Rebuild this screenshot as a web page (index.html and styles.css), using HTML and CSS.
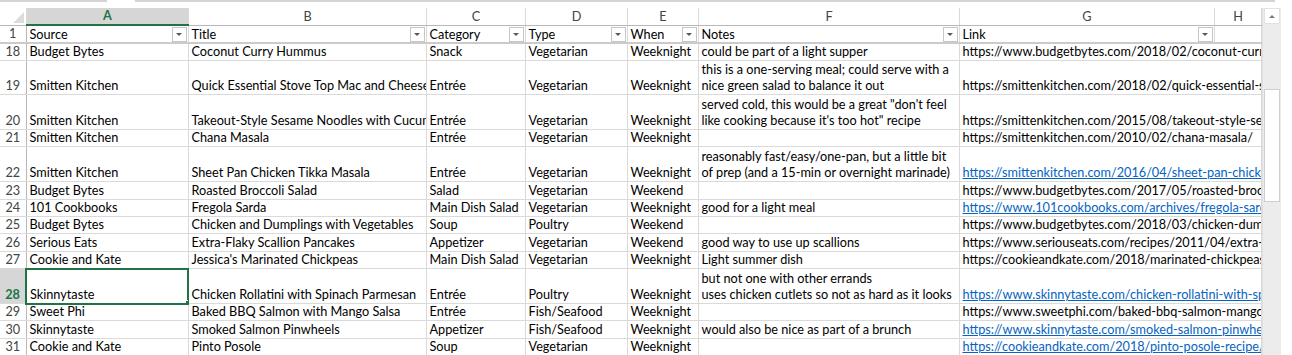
FILE: index.html
```html
<!DOCTYPE html>
<html lang="en">
<head>
    <meta charset="UTF-8">
    <meta name="viewport" content="width=device-width, initial-scale=1.0">
    <title>Recipes - Excel</title>
    <link rel="stylesheet" href="styles.css">
</head>
<body>
    <div class="formula-edge">
        <span class="name-box"></span>
        <span class="fx-gap"></span>
        <span class="formula-box"></span>
    </div>
    <div class="window">
        <table class="sheet">
            <colgroup>
                <col class="w-rh">
                <col class="w-a">
                <col class="w-b">
                <col class="w-c">
                <col class="w-d">
                <col class="w-e">
                <col class="w-f">
                <col class="w-g">
                <col class="w-h">
            </colgroup>
            <thead>
                <tr class="letters">
                    <th class="corner"><div class="corner-box"><span class="tri"></span></div></th>
                    <th class="col active">A</th>
                    <th class="col">B</th>
                    <th class="col">C</th>
                    <th class="col">D</th>
                    <th class="col">E</th>
                    <th class="col">F</th>
                    <th class="col">G</th>
                    <th class="col">H</th>
                </tr>
            </thead>
            <tbody>
                <tr class="frozen">
                    <td class="rn">1</td>
                    <td class="hd"><div class="hd-box"><span>Source</span><span class="filt"></span></div></td>
                    <td class="hd"><div class="hd-box"><span>Title</span><span class="filt"></span></div></td>
                    <td class="hd"><div class="hd-box"><span>Category</span><span class="filt"></span></div></td>
                    <td class="hd"><div class="hd-box"><span>Type</span><span class="filt"></span></div></td>
                    <td class="hd"><div class="hd-box"><span>When</span><span class="filt"></span></div></td>
                    <td class="hd"><div class="hd-box"><span>Notes</span><span class="filt"></span></div></td>
                    <td class="hd"><div class="hd-box"><span>Link</span><span class="filt"></span></div></td>
                    <td></td>
                </tr>
                <tr class="single">
                    <td class="rn">18</td>
                    <td>Budget Bytes</td>
                    <td>Coconut Curry Hummus</td>
                    <td>Snack</td>
                    <td>Vegetarian</td>
                    <td>Weeknight</td>
                    <td>could be part of a light supper</td>
                    <td class="link" colspan="2">https://www.budgetbytes.com/2018/02/coconut-curry-hummus/</td>
                </tr>
                <tr class="double">
                    <td class="rn">19</td>
                    <td>Smitten Kitchen</td>
                    <td>Quick Essential Stove Top Mac and Cheese</td>
                    <td>Entrée</td>
                    <td>Vegetarian</td>
                    <td>Weeknight</td>
                    <td class="wrap">this is a one-serving meal; could serve with a<br>nice green salad to balance it out</td>
                    <td class="link" colspan="2">https://smittenkitchen.com/2018/02/quick-essential-stovetop-mac-and-cheese/</td>
                </tr>
                <tr class="double">
                    <td class="rn">20</td>
                    <td>Smitten Kitchen</td>
                    <td>Takeout-Style Sesame Noodles with Cucumber</td>
                    <td>Entrée</td>
                    <td>Vegetarian</td>
                    <td>Weeknight</td>
                    <td class="wrap">served cold, this would be a great "don't feel<br>like cooking because it's too hot" recipe</td>
                    <td class="link" colspan="2">https://smittenkitchen.com/2015/08/takeout-style-sesame-noodles-with-cucumber/</td>
                </tr>
                <tr class="single">
                    <td class="rn">21</td>
                    <td>Smitten Kitchen</td>
                    <td>Chana Masala</td>
                    <td>Entrée</td>
                    <td>Vegetarian</td>
                    <td>Weeknight</td>
                    <td></td>
                    <td class="link" colspan="2">https://smittenkitchen.com/2010/02/chana-masala/</td>
                </tr>
                <tr class="double">
                    <td class="rn">22</td>
                    <td>Smitten Kitchen</td>
                    <td>Sheet Pan Chicken Tikka Masala</td>
                    <td>Entrée</td>
                    <td>Vegetarian</td>
                    <td>Weeknight</td>
                    <td class="wrap">reasonably fast/easy/one-pan, but a little bit<br>of prep (and a 15-min or overnight marinade)</td>
                    <td class="link" colspan="2"><a href="#">https://smittenkitchen.com/2016/04/sheet-pan-chicken-tikka/</a></td>
                </tr>
                <tr class="single">
                    <td class="rn">23</td>
                    <td>Budget Bytes</td>
                    <td>Roasted Broccoli Salad</td>
                    <td>Salad</td>
                    <td>Vegetarian</td>
                    <td>Weekend</td>
                    <td></td>
                    <td class="link" colspan="2">https://www.budgetbytes.com/2017/05/roasted-broccoli-salad/</td>
                </tr>
                <tr class="single">
                    <td class="rn">24</td>
                    <td>101 Cookbooks</td>
                    <td>Fregola Sarda</td>
                    <td>Main Dish Salad</td>
                    <td>Vegetarian</td>
                    <td>Weeknight</td>
                    <td>good for a light meal</td>
                    <td class="link" colspan="2"><a href="#">https://www.101cookbooks.com/archives/fregola-sarda-recipe.html</a></td>
                </tr>
                <tr class="single">
                    <td class="rn">25</td>
                    <td>Budget Bytes</td>
                    <td>Chicken and Dumplings with Vegetables</td>
                    <td>Soup</td>
                    <td>Poultry</td>
                    <td>Weekend</td>
                    <td></td>
                    <td class="link" colspan="2">https://www.budgetbytes.com/2018/03/chicken-dumplings-vegetables/</td>
                </tr>
                <tr class="single">
                    <td class="rn">26</td>
                    <td>Serious Eats</td>
                    <td>Extra-Flaky Scallion Pancakes</td>
                    <td>Appetizer</td>
                    <td>Vegetarian</td>
                    <td>Weekend</td>
                    <td>good way to use up scallions</td>
                    <td class="link" colspan="2">https://www.seriouseats.com/recipes/2011/04/extra-flaky-scallion-pancakes.html</td>
                </tr>
                <tr class="single">
                    <td class="rn">27</td>
                    <td>Cookie and Kate</td>
                    <td>Jessica's Marinated Chickpeas</td>
                    <td>Main Dish Salad</td>
                    <td>Vegetarian</td>
                    <td>Weeknight</td>
                    <td>Light summer dish</td>
                    <td class="link" colspan="2">https://cookieandkate.com/2018/marinated-chickpeas-recipe/</td>
                </tr>
                <tr class="double">
                    <td class="rn active">28</td>
                    <td class="sel">Skinnytaste</td>
                    <td>Chicken Rollatini with Spinach Parmesan</td>
                    <td>Entrée</td>
                    <td>Poultry</td>
                    <td>Weeknight</td>
                    <td class="wrap">but not one with other errands<br>uses chicken cutlets so not as hard as it looks</td>
                    <td class="link" colspan="2"><a href="#">https://www.skinnytaste.com/chicken-rollatini-with-spinach-parmesan/</a></td>
                </tr>
                <tr class="single">
                    <td class="rn">29</td>
                    <td>Sweet Phi</td>
                    <td>Baked BBQ Salmon with Mango Salsa</td>
                    <td>Entrée</td>
                    <td>Fish/Seafood</td>
                    <td>Weeknight</td>
                    <td></td>
                    <td class="link" colspan="2">https://www.sweetphi.com/baked-bbq-salmon-mango-salsa/</td>
                </tr>
                <tr class="single">
                    <td class="rn">30</td>
                    <td>Skinnytaste</td>
                    <td>Smoked Salmon Pinwheels</td>
                    <td>Appetizer</td>
                    <td>Fish/Seafood</td>
                    <td>Weeknight</td>
                    <td>would also be nice as part of a brunch</td>
                    <td class="link" colspan="2"><a href="#">https://www.skinnytaste.com/smoked-salmon-pinwheels/</a></td>
                </tr>
                <tr class="single">
                    <td class="rn">31</td>
                    <td>Cookie and Kate</td>
                    <td>Pinto Posole</td>
                    <td>Soup</td>
                    <td>Vegetarian</td>
                    <td>Weeknight</td>
                    <td></td>
                    <td class="link" colspan="2"><a href="#">https://cookieandkate.com/2018/pinto-posole-recipe/</a></td>
                </tr>
            </tbody>
        </table>
        <div class="vscroll">
            <div class="arrow"></div>
            <div class="thumb"></div>
        </div>
    </div>
</body>
</html>
```

FILE: styles.css
```css
body {
    margin: 0;
    padding: 0;
    background-color: #ffffff;
    color: #000000;
    font-family: Lato, "Noto Sans", sans-serif;
    font-size: 12.7px;
    overflow: hidden;
}

/* bottom edge of the formula bar */
.formula-edge {
    display: flex;
    height: 2px;
    margin-bottom: 6px;
}

.name-box {
    width: 107px;
    background-color: #d4d4d4;
}

.fx-gap {
    width: 28px;
}

.formula-box {
    width: 1140px;
    background-color: #d4d4d4;
}

.window {
    display: flex;
    align-items: flex-start;
}

.sheet {
    border-collapse: collapse;
    table-layout: fixed;
    width: 1261px;
}

.w-rh { width: 26px; }
.w-a { width: 162px; }
.w-b { width: 238px; }
.w-c { width: 99px; }
.w-d { width: 102px; }
.w-e { width: 71px; }
.w-f { width: 261px; }
.w-g { width: 255px; }
.w-h { width: 47px; }

.sheet td,
.sheet th {
    padding: 0 2px 1px 3px;
    border: 1px solid #dadada;
    white-space: nowrap;
    overflow: hidden;
    vertical-align: bottom;
    text-align: left;
    font-weight: normal;
    line-height: 15px;
}

.letters {
    height: 17px;
}

.sheet th {
    border-top: none;
}

.sheet th.col {
    text-align: center;
    color: #444444;
    border-bottom: 1px solid #b8b8b8;
}

.sheet th.col.active {
    background-color: #d6d6d6;
    color: #217346;
    font-weight: bold;
    border-bottom: 2px solid #217346;
}

.sheet th.corner {
    padding: 0;
    border-left: none;
    border-bottom: 1px solid #b8b8b8;
}

.corner-box {
    display: flex;
    justify-content: flex-end;
    align-items: flex-end;
    height: 15px;
}

.tri {
    width: 0;
    height: 0;
    border-left: 11px solid transparent;
    border-bottom: 11px solid #dcdcdc;
    margin: 0 2px 2px 0;
}

.sheet td.rn {
    padding: 0 0 1px;
    text-align: center;
    color: #444444;
    border-left: none;
    border-right: 1px solid #b8b8b8;
}

.sheet td.rn.active {
    background-color: #d6d6d6;
    color: #217346;
    font-weight: bold;
    border-right: 2px solid #217346;
}

.frozen {
    height: 17px;
}

.frozen td {
    border-bottom: 2px solid #cbcbcb;
}

.sheet td.hd {
    padding: 0 1px 0 3px;
}

.hd-box {
    display: flex;
    justify-content: space-between;
    align-items: flex-end;
    height: 15px;
}

.filt {
    display: flex;
    justify-content: center;
    align-items: center;
    width: 13px;
    height: 13px;
    border: 1px solid #c6c6c6;
    background-color: #ffffff;
}

.filt::after {
    content: "";
    border-left: 3px solid transparent;
    border-right: 3px solid transparent;
    border-top: 3px solid #595959;
}

.single {
    height: 17.4px;
}

.double {
    height: 34.8px;
}

.sheet td.wrap {
    white-space: normal;
    line-height: 16px;
}

.sheet td.sel {
    position: relative;
    outline: 2px solid #217346;
    outline-offset: -1px;
}

/* fill handle */
.sheet td.sel::after {
    content: "";
    position: absolute;
    right: -3px;
    bottom: -3px;
    width: 4px;
    height: 4px;
    background-color: #217346;
    border: 1px solid #ffffff;
}

.link a {
    color: #0563c1;
    text-decoration: underline;
}

.vscroll {
    display: flex;
    flex-direction: column;
    align-items: center;
    width: 18px;
    height: 347px;
    background-color: #ececec;
    border-left: 1px solid #e0e0e0;
}

.arrow {
    display: flex;
    justify-content: center;
    align-items: center;
    width: 16px;
    height: 16px;
    background-color: #ffffff;
    border: 1px solid #e3e3e3;
    box-sizing: border-box;
}

.arrow::after {
    content: "";
    border-left: 3px solid transparent;
    border-right: 3px solid transparent;
    border-bottom: 3px solid #7a7a7a;
}

.thumb {
    width: 16px;
    height: 113px;
    margin-top: 65px;
    background-color: #ffffff;
    border: 1px solid #cfcfcf;
    box-sizing: border-box;
}
```
